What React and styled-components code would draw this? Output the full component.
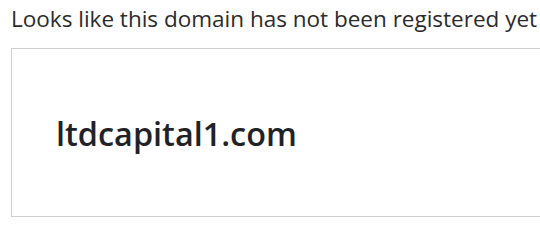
import React from 'react'
import styled, { createGlobalStyle } from 'styled-components'

const Global = createGlobalStyle`
  html, body {
    margin: 0;
    padding: 0;
    background: #fff;
  }
  body {
    font-family: "Open Sans", "Liberation Sans", sans-serif;
  }
`

const Page = () => (
  <Wrap>
    <Global />
    <Title>Looks like this domain has not been registered yet</Title>
    <DomainBox>
      <Domain>ltdcapital1.com</Domain>
    </DomainBox>
  </Wrap>
)

export default Page

// ------- STYLES -------
const Wrap = styled.main`
  padding: 0 0 0 11px;
  overflow: hidden;
`

const Title = styled.h1`
  margin: 0;
  padding-top: 4px;
  font-size: 22.5px;
  line-height: 30px;
  font-weight: 400;
  color: #2b2b2b;
  white-space: nowrap;
`

const DomainBox = styled.section`
  margin: 14px -20px 0 0;
  height: 169px;
  box-sizing: border-box;
  border: 1px solid #cfcfcf;
  display: flex;
  align-items: center;
  padding-left: 44px;
`

const Domain = styled.div`
  font-size: 32.4px;
  font-weight: 600;
  color: #1f2328;
  line-height: 1;
  padding-top: 2px;
`
